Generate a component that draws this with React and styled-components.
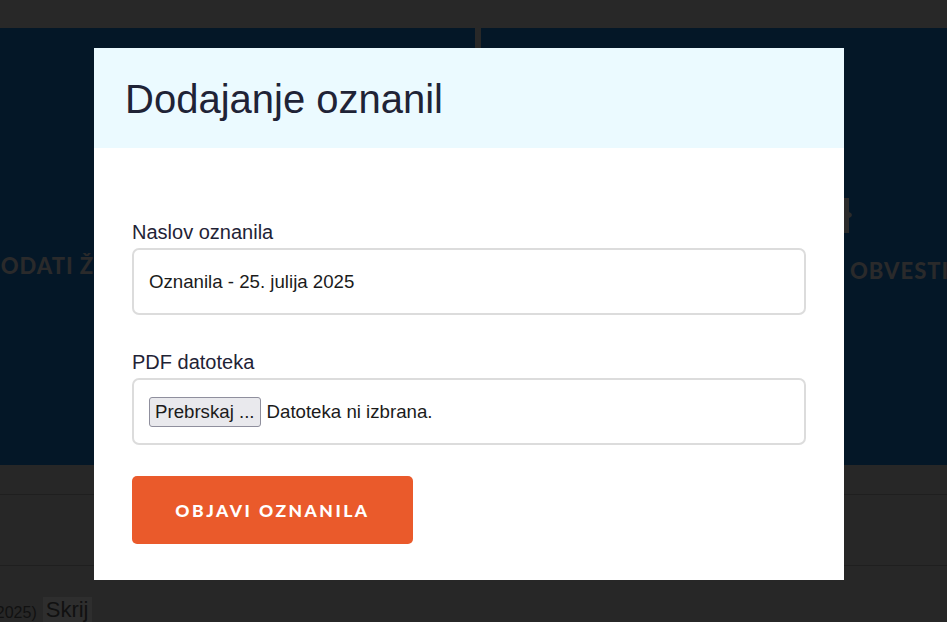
import React from "react";
import styled, { createGlobalStyle } from "styled-components";

const Global = createGlobalStyle`
  html, body { margin: 0; padding: 0; background: #272727; overflow: hidden; }
  * { box-sizing: border-box; }
  #root { width: 947px; height: 622px; }
`;

const Page = styled.div`
  width: 947px;
  height: 622px;
  display: flex;
  flex-direction: column;
  background: #272727;
  overflow: hidden;
`;

const TopBar = styled.div`
  height: 28px;
  flex: none;
  background: #282828;
`;

const Hero = styled.div`
  height: 437px;
  flex: none;
  display: grid;
  grid-template-columns: 475px 1fr;
  column-gap: 6px;
  background: #282828;
`;

const Panel = styled.div`
  background: #041727;
  display: flex;
  flex-direction: column;
  align-items: flex-start;
  padding-top: ${(p) => p.$top}px;
  padding-left: ${(p) => p.$left}px;
  overflow: hidden;
`;

const PanelIcon = styled.svg`
  display: block;
  margin-bottom: 22px;
`;

const PanelText = styled.div`
  font-family: Lato, "Liberation Sans", sans-serif;
  font-weight: 900;
  font-size: 22px;
  letter-spacing: 1px;
  color: #2a2a2b;
  white-space: nowrap;
  margin-left: ${(p) => p.$shift || 0}px;
`;

const Band = styled.div`
  height: ${(p) => p.$h}px;
  flex: none;
  border-bottom: 1px solid #1f1f1f;
`;

const FootRow = styled.div`
  flex: 1;
  display: flex;
  align-items: flex-end;
  gap: 6px;
  font-family: "Liberation Sans", Arial, sans-serif;
  color: #111;
`;

const DateText = styled.span`
  font-size: 16px;
  margin-left: -54px;
  line-height: 18px;
  white-space: nowrap;
`;

const HideButton = styled.span`
  background: #2e2e2e;
  font-size: 22px;
  line-height: 25px;
  padding: 0 3px;
  height: 25px;
`;

const Overlay = styled.div`
  position: fixed;
  inset: 0;
  display: flex;
  align-items: flex-start;
  padding: 48px 0 0 94px;
`;

const Modal = styled.div`
  width: 750px;
  background: #ffffff;
  font-family: "Liberation Sans", Arial, sans-serif;
`;

const Header = styled.div`
  height: 100px;
  background: #ebfaff;
  display: flex;
  align-items: center;
  padding: 0 31px;
`;

const Title = styled.h2`
  margin: 0;
  font-size: 40px;
  font-weight: 400;
  color: #1f2336;
  line-height: 1;
  padding-top: 2px;
`;

const Body = styled.form`
  padding: 73px 38px 36px;
  display: flex;
  flex-direction: column;
`;

const Field = styled.div`
  display: flex;
  flex-direction: column;
  margin-bottom: ${(p) => p.$mb}px;
`;

const Label = styled.label`
  font-size: 20px;
  line-height: 23px;
  color: #1f2336;
  margin-bottom: 4px;
`;

const Box = styled.div`
  height: 67px;
  border: 2px solid #dcdcdc;
  border-radius: 7px;
  display: flex;
  align-items: center;
  padding: 0 15px;
  font-size: 18.67px;
  color: #1b1b1b;
  gap: 6px;
`;

const FileButton = styled.span`
  height: 30px;
  display: inline-flex;
  align-items: center;
  padding: 0 5px;
  background: #e9e9ed;
  border: 1px solid #8f8f9d;
  border-radius: 3px;
  font-size: 18.67px;
  color: #1b1b1b;
  margin-top: 1px;
`;

const Submit = styled.button`
  width: 281px;
  height: 68px;
  border: none;
  border-radius: 5px;
  background: #ea5a2b;
  color: #fff;
  font-family: Lato, "Liberation Sans", sans-serif;
  font-weight: 900;
  font-size: 17.5px;
  letter-spacing: 2.5px;
  padding: 0;
  cursor: pointer;
`;

export default function App() {
  return (
    <>
      <Global />
      <Page>
        <TopBar />
        <Hero>
          <Panel $top={224} $left={0}>
            <PanelText $shift={-17}>DODATI ŽIVE PRENOSE</PanelText>
          </Panel>
          <Panel $top={169} $left={357}>
            <PanelIcon width="14" height="38" viewBox="0 0 14 38">
              <path d="M0 1 H11 V15 Q14 16 14 18 Q14 20 11 21 V36 H0 Z" fill="#2b2b2b" />
            </PanelIcon>
            <PanelText $shift={12}>OBVESTILA</PanelText>
          </Panel>
        </Hero>
        <Band $h={30} />
        <Band $h={71} />
        <FootRow>
          <DateText>(25. 7. 2025)</DateText>
          <HideButton>Skrij</HideButton>
        </FootRow>
      </Page>
      <Overlay>
        <Modal>
          <Header>
            <Title>Dodajanje oznanil</Title>
          </Header>
          <Body onSubmit={(e) => e.preventDefault()}>
            <Field $mb={36}>
              <Label>Naslov oznanila</Label>
              <Box>Oznanila - 25. julija 2025</Box>
            </Field>
            <Field $mb={31}>
              <Label>PDF datoteka</Label>
              <Box>
                <FileButton>Prebrskaj ...</FileButton>
                <span>Datoteka ni izbrana.</span>
              </Box>
            </Field>
            <Submit type="submit">OBJAVI OZNANILA</Submit>
          </Body>
        </Modal>
      </Overlay>
    </>
  );
}
